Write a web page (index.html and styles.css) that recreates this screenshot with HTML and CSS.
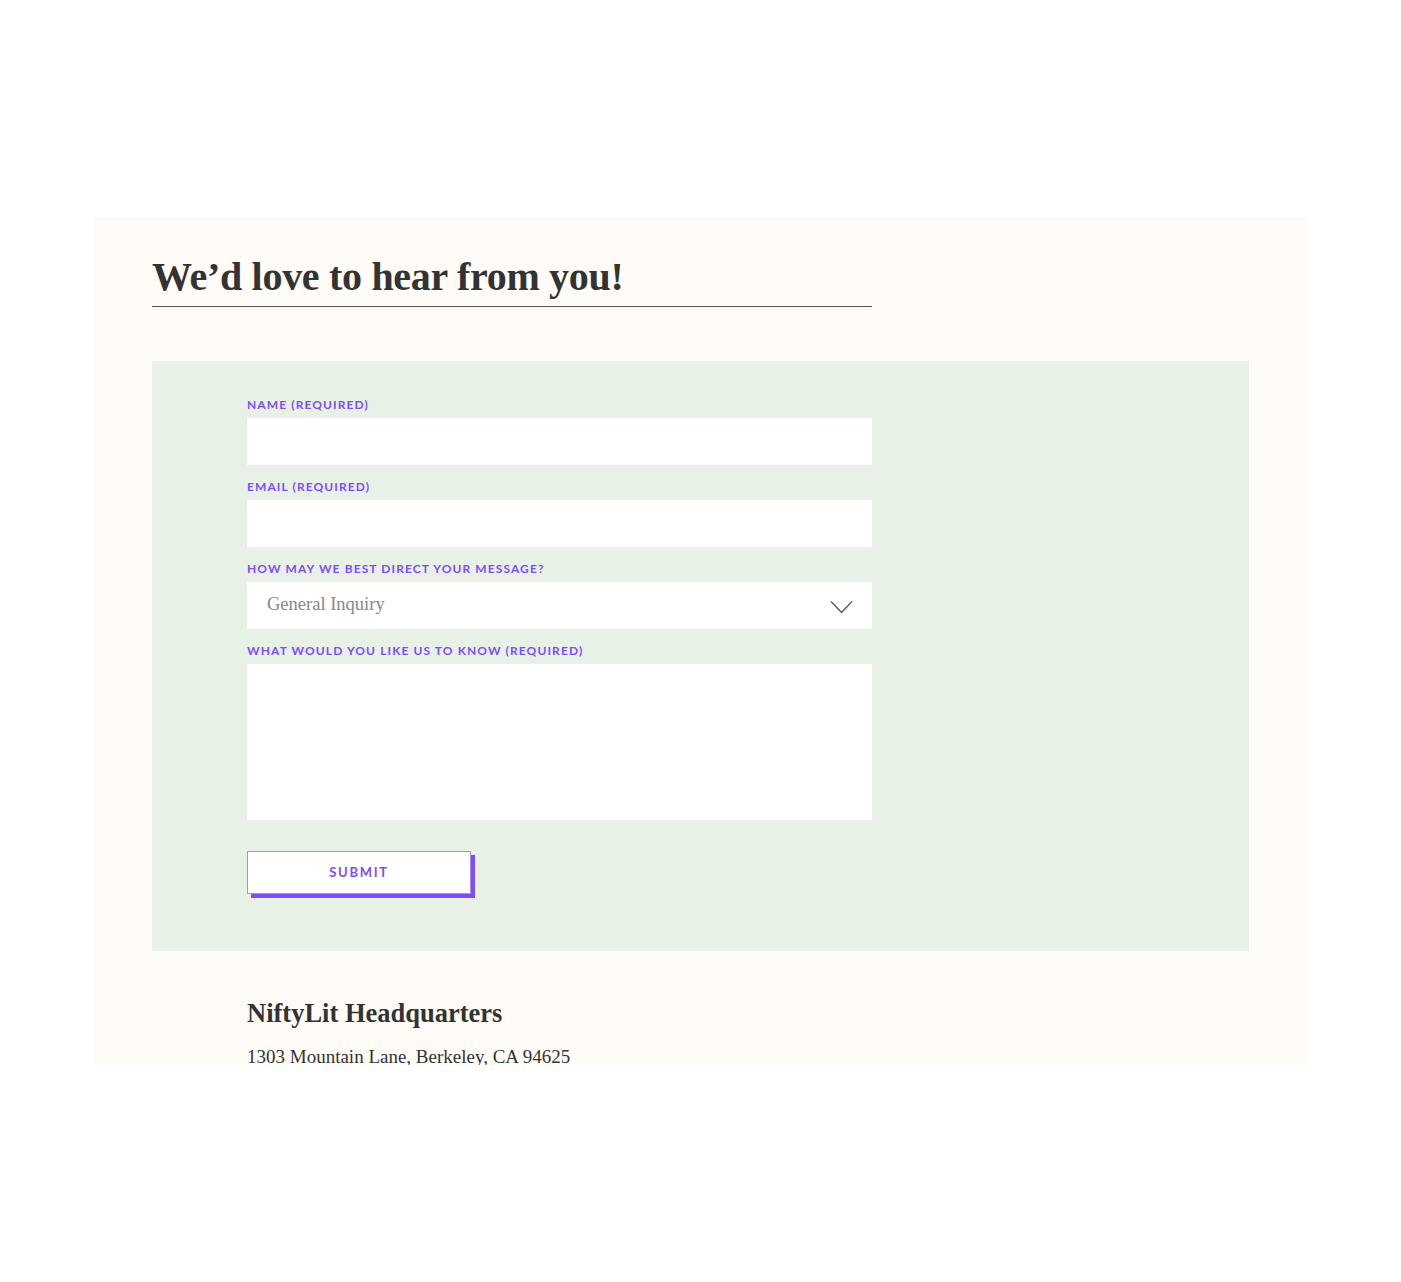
FILE: index.html
```html
<!DOCTYPE html>
<html lang="en">
<head>
<meta charset="utf-8">
<title>Contact</title>
<link rel="stylesheet" href="styles.css">
</head>
<body>
<div class="page">
  <section class="card">
    <div class="title-wrap">
      <h1 class="title">We’d love to hear from you!</h1>
    </div>
    <form class="panel">
      <label class="label" for="name">Name (required)</label>
      <input class="field" id="name" type="text">
      <label class="label" for="email">Email (required)</label>
      <input class="field" id="email" type="email">
      <label class="label" for="topic">How may we best direct your message?</label>
      <div class="select-wrap">
        <select class="field select" id="topic">
          <option>General Inquiry</option>
        </select>
        <svg class="chevron" width="23" height="14" viewBox="0 0 23 14" aria-hidden="true">
          <path d="M1 1.5 L11.5 12.5 L22 1.5" fill="none" stroke="#555" stroke-width="1.3"/>
        </svg>
      </div>
      <label class="label" for="msg">What would you like us to know (required)</label>
      <textarea class="field area" id="msg"></textarea>
      <div class="actions">
        <button class="submit" type="button">Submit</button>
      </div>
    </form>
    <div class="hq">
      <h2 class="hq-title">NiftyLit Headquarters</h2>
      <p class="hq-addr">1303 Mountain Lane, Berkeley, CA 94625</p>
    </div>
  </section>
</div>
</body>
</html>
```
FILE: styles.css
```css
html, body {
  margin: 0;
  padding: 0;
  background: #ffffff;
}
.page {
  padding: 217px 0 0 93px;
}
.card {
  width: 1215px;
  height: 848px;
  box-sizing: border-box;
  background: #fffcf7;
  padding: 36px 59px 0 59px;
  overflow: hidden;
}
.title-wrap {
  width: 720px;
  border-bottom: 1px solid #555;
  padding-bottom: 5px;
}
.title {
  margin: 0;
  font-family: "Liberation Serif", "DejaVu Serif", serif;
  font-weight: 700;
  font-size: 40px;
  line-height: 48px;
  color: #333;
  letter-spacing: -0.3px;
}
.panel {
  margin-top: 54px;
  width: 1097px;
  height: 590px;
  box-sizing: border-box;
  background: #e7f1e6;
  padding: 37px 0 0 95px;
  display: flex;
  flex-direction: column;
  align-items: flex-start;
}
.label {
  display: block;
  font-family: Lato, "Open Sans", sans-serif;
  font-weight: 700;
  font-size: 12px;
  line-height: 14px;
  letter-spacing: 1.1px;
  text-transform: uppercase;
  color: #7d4dfa;
  margin-bottom: 6px;
}
.field {
  display: block;
  width: 625px;
  height: 47px;
  box-sizing: border-box;
  border: 0;
  margin: 0 0 15px 0;
  background: #ffffff;
  padding: 0 20px;
  font-family: "Liberation Serif", serif;
  font-size: 18px;
  color: #888;
  outline: none;
  border-radius: 0;
}
.select-wrap {
  position: relative;
  width: 625px;
  height: 47px;
  margin-bottom: 15px;
}
.select {
  -webkit-appearance: none;
  appearance: none;
  margin: 0;
  padding-bottom: 3px;
  color: #888;
  font-size: 18.5px;
}
.chevron {
  position: absolute;
  left: 583px;
  top: 18px;
  pointer-events: none;
}
.area {
  height: 156px;
  margin-bottom: 0;
  resize: none;
  padding: 12px 20px;
}
.actions {
  margin-top: 31px;
}
.submit {
  display: block;
  width: 224px;
  height: 43px;
  box-sizing: border-box;
  background: #ffffff;
  border: 1px solid #a98af7;
  box-shadow: 4px 4px 0 0 #7d4dfa;
  font-family: Lato, "Open Sans", sans-serif;
  font-weight: 700;
  font-size: 13px;
  letter-spacing: 1.7px;
  text-transform: uppercase;
  color: #7d4dfa;
  padding: 0 0 2px 0;
  cursor: pointer;
}
.hq {
  padding: 46px 0 0 95px;
}
.hq-title {
  margin: 0;
  font-family: "Liberation Serif", serif;
  font-weight: 700;
  font-size: 26.5px;
  line-height: 32px;
  color: #333;
}
.hq-addr {
  margin: 16px 0 0 0;
  font-family: "Liberation Serif", serif;
  font-size: 19px;
  line-height: 24px;
  color: #333;
}
```
